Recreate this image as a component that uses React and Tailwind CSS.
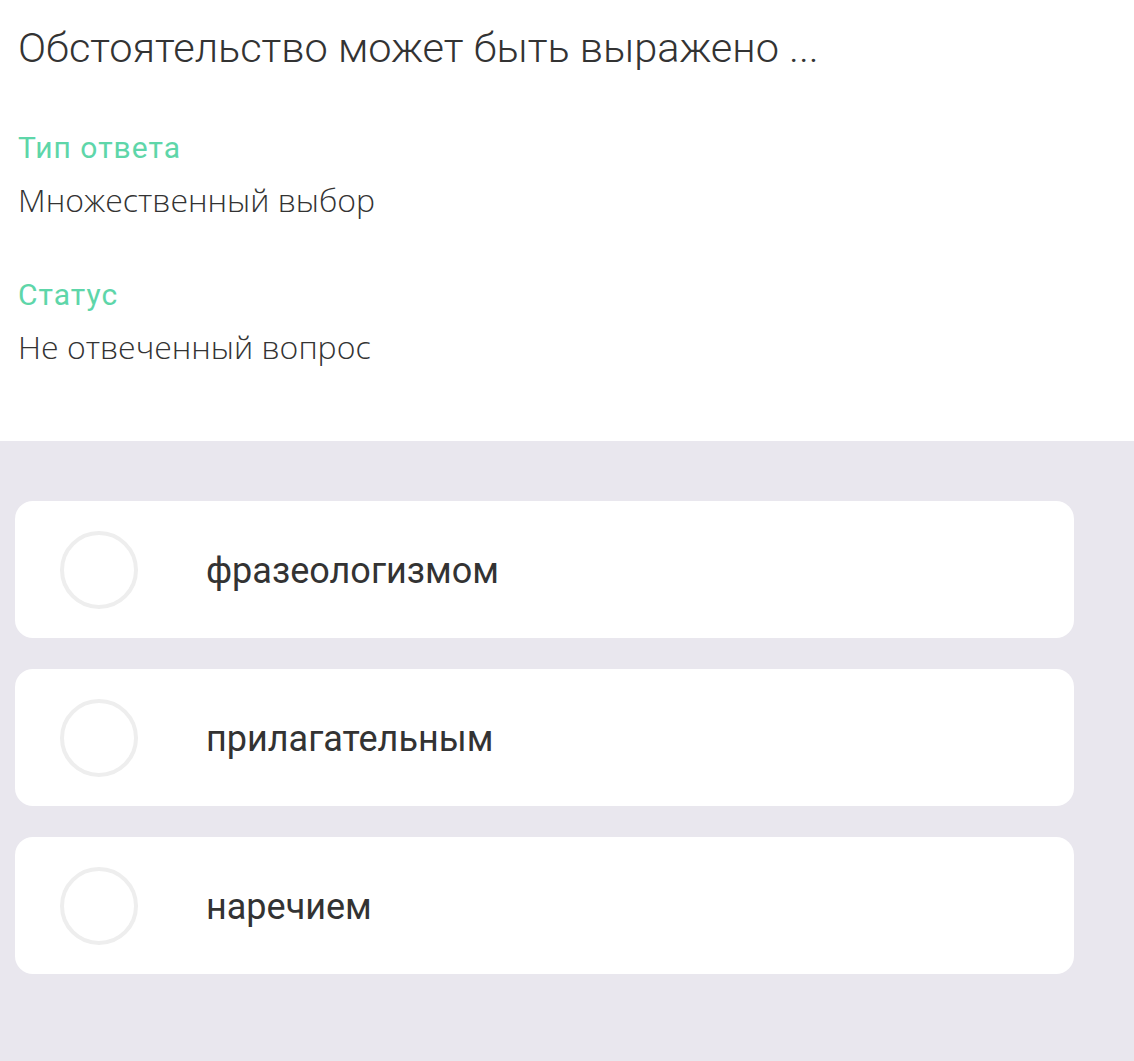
import React from "react";

const options = ["фразеологизмом", "прилагательным", "наречием"];

export default function App() {
  return (
    <div className="min-h-screen w-full bg-white font-['Roboto',sans-serif] text-[#333]">
      <div className="pl-[18px] pt-[20px] pb-[72px]">
        <h1 className="text-[41.5px] font-light leading-[56px] text-[#333]">
          Обстоятельство может быть выражено ...
        </h1>
        <div className="mt-[52px]">
          <div className="text-[30px] leading-[40px] tracking-[1px] text-[#5ed6a9]">Тип ответа</div>
          <div className="mt-[10px] font-['Open_Sans',sans-serif] text-[32px] font-light leading-[44px] text-[#333]">
            Множественный выбор
          </div>
        </div>
        <div className="mt-[53px]">
          <div className="text-[30px] leading-[40px] tracking-[1px] text-[#5ed6a9]">Статус</div>
          <div className="mt-[10px] font-['Open_Sans',sans-serif] text-[32px] font-light leading-[44px] text-[#333]">
            Не отвеченный вопрос
          </div>
        </div>
      </div>
      <div className="bg-[#e9e7ee] pl-[15px] pr-[60px] pt-[60px] pb-[87px]">
        <div className="flex flex-col gap-[31px]">
          {options.map((o) => (
            <div key={o} className="flex h-[137px] items-center rounded-[18px] bg-white pl-[45px]">
              <div className="h-[78px] w-[78px] rounded-full border-[4px] border-[#eeeeee]" />
              <span className="ml-[68px] mt-[3px] text-[36px] leading-none text-[#333]">{o}</span>
            </div>
          ))}
        </div>
      </div>
    </div>
  );
}
